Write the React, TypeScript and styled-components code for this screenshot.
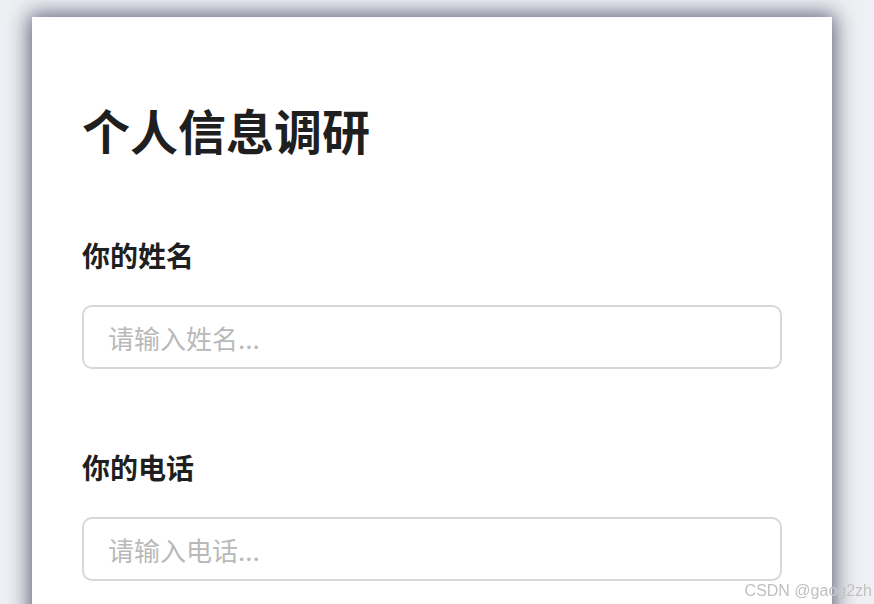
import React from "react";
import styled, { createGlobalStyle } from "styled-components";

const GlobalStyle = createGlobalStyle`
  html, body {
    margin: 0;
    padding: 0;
    background-color: #eff0f4;
    font-family: "Noto Sans CJK SC", "Noto Sans", sans-serif;
  }
`;

const Page = styled.div`
  padding: 17px 0 0 32px;
  height: 604px;
  overflow: hidden;
  box-sizing: border-box;
`;

const Card = styled.div`
  width: 800px;
  min-height: 700px;
  box-sizing: border-box;
  padding: 79px 50px 50px;
  background-color: #ffffff;
  box-shadow: 0 0 20px 3px rgba(50, 50, 80, 0.75);
`;

const Title = styled.h1`
  margin: 0 0 73px;
  font-size: 48px;
  line-height: 67px;
  font-weight: 700;
  color: #1f1f1f;
`;

const Field = styled.div`
  display: flex;
  flex-direction: column;
  margin-bottom: 79px;
`;

const Label = styled.label`
  font-size: 28px;
  line-height: 39px;
  font-weight: 700;
  color: #1f1f1f;
  margin-bottom: 30px;
`;

const Input = styled.input`
  width: 700px;
  height: 64px;
  box-sizing: border-box;
  padding: 0 24px;
  border: 2px solid #d8d8d8;
  border-radius: 10px;
  font-family: "Noto Sans CJK SC", "Noto Sans", sans-serif;
  font-size: 26px;
  color: #1f1f1f;
  outline: none;

  &::placeholder {
    color: #b9b9b9;
  }
`;

const Watermark = styled.div`
  position: fixed;
  right: 2px;
  bottom: 4px;
  font-family: "Liberation Sans", Arial, sans-serif;
  font-size: 16px;
  color: #c0c0c0;
  text-shadow: 0 0 1px rgba(255, 255, 255, 0.6);
`;

const fields = [
  { label: "你的姓名", placeholder: "请输入姓名..." },
  { label: "你的电话", placeholder: "请输入电话..." },
];

const App = () => {
  return (
    <>
      <GlobalStyle />
      <Page>
        <Card>
          <Title>个人信息调研</Title>
          {fields.map((f) => (
            <Field key={f.label}>
              <Label>{f.label}</Label>
              <Input placeholder={f.placeholder} />
            </Field>
          ))}
        </Card>
      </Page>
      <Watermark>CSDN @gaog2zh</Watermark>
    </>
  );
};

export default App;
